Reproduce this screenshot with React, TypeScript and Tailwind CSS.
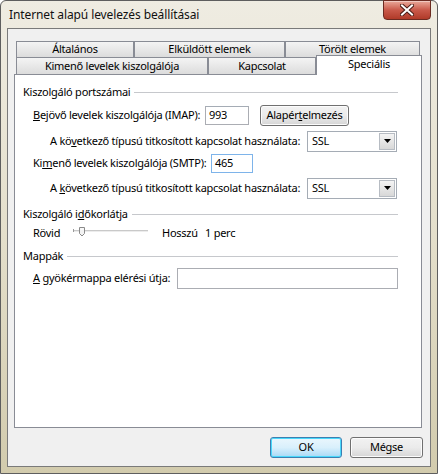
import React from "react";

const font = "font-['Noto_Sans',sans-serif]";

function Tab({ label, w, selected }: { label: string; w: string; selected?: boolean }) {
  if (selected) {
    return (
      <div
        className={`${w} relative z-10 -mt-[2px] -mb-[1px] h-[20px] border border-b-0 border-[#898c95] bg-white flex items-start justify-center leading-[16px] text-black`}
      >
        {label}
      </div>
    );
  }
  return (
    <div
      className={`${w} h-full border border-b-0 border-[#898c95] bg-gradient-to-b from-[#f4f4f4] to-[#dcdcdc] flex items-center justify-center text-black`}
    >
      {label}
    </div>
  );
}

function GroupHeader({ children }: { children: React.ReactNode }) {
  return (
    <div className="h-[16px] flex items-center gap-[4px]">
      <span className="whitespace-nowrap">{children}</span>
      <div className="flex-1 border-t border-[#c6c8cc]" />
    </div>
  );
}

function Select({ value }: { value: string }) {
  return (
    <div className="w-[90px] h-[21px] border border-[#a5acb5] bg-white p-[1px] flex">
      <div className="flex-1 flex items-center pl-[3px]">{value}</div>
      <div className="w-[16px] h-full border border-[#b7bcc3] bg-gradient-to-b from-[#f4f4f4] to-[#d8d8d8] flex items-center justify-center">
        <svg width="7" height="4" viewBox="0 0 7 4">
          <path d="M0 0h7L3.5 4z" fill="#000" />
        </svg>
      </div>
    </div>
  );
}

function Slider() {
  return (
    <svg width="76" height="20" viewBox="0 0 76 20" className="shrink-0">
      <rect x="0" y="7" width="75" height="1" fill="#c9c9c9" />
      <rect x="0" y="8" width="75" height="1" fill="#ececec" />
      <path d="M0.5 6v3" stroke="#9a9a9a" />
      <path d="M6.5 4.5h5v6l-2.5 2.5l-2.5-2.5z" fill="#f3f3f3" stroke="#8a8a8a" />
      <path d="M7.5 6h3" stroke="#ffffff" />
    </svg>
  );
}

export default function App() {
  return (
    <div className={`${font} w-[438px] h-[474px] bg-white`}>
      <div className="w-[438px] h-[474px] flex flex-col border border-[#5e5e5e] rounded-t-[6px] bg-gradient-to-b from-[#efece2] via-[#e4dfcb] to-[#d2cbad]">
        {/* title bar */}
        <div className="h-[27px] flex items-start justify-between shrink-0">
          <div className="pl-[8px] pt-[5px] text-[12px] tracking-[-0.1px] text-[#111] whitespace-nowrap">
            Internet alapú levelezés beállításai
          </div>
          <div className="mr-[6px] -mt-[1px] w-[48px] h-[20px] rounded-b-[4px] border border-[#6b2b22] bg-gradient-to-b from-[#e9a99b] via-[#c9594a] to-[#b03a28] flex items-center justify-center shadow-[inset_0_1px_0_rgba(255,255,255,0.4)]">
            <svg width="14" height="12" viewBox="0 0 14 12">
              <path d="M2 1.5l10 9M12 1.5l-10 9" stroke="#4a1c16" strokeWidth="4" strokeLinecap="square" />
              <path d="M2 1.5l10 9M12 1.5l-10 9" stroke="#ffffff" strokeWidth="2" strokeLinecap="square" />
            </svg>
          </div>
        </div>

        {/* client */}
        <div className="mx-[6px] mb-[6px] flex-1 border border-[#7a7a7a] bg-[#f0f0f0] flex flex-col text-[11px] tracking-[-0.25px] text-black">
          <div className="pt-[12px] pl-[8px] flex flex-col">
            <div className="h-[16px] flex">
              <Tab label="Általános" w="w-[118px]" />
              <Tab label="Elküldött elemek" w="w-[151px]" />
              <Tab label="Törölt elemek" w="w-[135px]" />
            </div>
            <div className="h-[17px] flex">
              <Tab label="Kimenő levelek kiszolgálója" w="w-[192px]" />
              <Tab label="Kapcsolat" w="w-[108px]" />
              <Tab label="Speciális" w="w-[106px]" selected />
            </div>
          </div>

          {/* panel */}
          <div className="ml-[6px] w-[408px] h-[354px] border border-[#898c95] bg-white pl-[8px] pr-[23px] pt-[9px] flex flex-col">
            <GroupHeader>Kiszolgáló portszámai</GroupHeader>

            <div className="mt-[5px] h-[20px] flex items-center pl-[10px]">
              <div className="w-[172px] whitespace-nowrap">
                <u>B</u>ejövő levelek kiszolgálója (IMAP):
              </div>
              <div className="w-[44px] h-[19px] border border-[#abadb3] border-t-[#a5acb5] flex items-center pl-[3px]">993</div>
              <div className="ml-[11px] w-[89px] h-[21px] rounded-[3px] border border-[#707070] bg-gradient-to-b from-[#f2f2f2] via-[#ebebeb] to-[#d6d6d6] flex items-center justify-center shadow-[inset_0_0_0_1px_#fcfcfc]">
                Alapér<u>t</u>elmezés
              </div>
            </div>

            <div className="mt-[6px] h-[20px] flex items-center pl-[27px]">
              <div className="w-[257px] whitespace-nowrap">
                A kö<u>v</u>etkező típusú titkosított kapcsolat használata:
              </div>
              <Select value="SSL" />
            </div>

            <div className="mt-[2px] h-[20px] flex items-center pl-[10px]">
              <div className="w-[178px] whitespace-nowrap">
                Ki<u>m</u>enő levelek kiszolgálója (SMTP):
              </div>
              <div className="w-[42px] h-[19px] border border-[#7eb4ea] flex items-center pl-[3px]">465</div>
            </div>

            <div className="mt-[5px] h-[20px] flex items-center pl-[27px]">
              <div className="w-[257px] whitespace-nowrap">
                A <u>k</u>övetkező típusú titkosított kapcsolat használata:
              </div>
              <Select value="SSL" />
            </div>

            <div className="mt-[8px]">
              <GroupHeader>
                Kiszolgáló i<u>d</u>őkorlátja
              </GroupHeader>
            </div>

            <div className="mt-[1px] h-[20px] flex items-center pl-[10px]">
              <div className="w-[40px]">Rövid</div>
              <Slider />
              <div className="ml-[13px] w-[43px]">Hosszú</div>
              <div>1 perc</div>
            </div>

            <div className="mt-[5px]">
              <GroupHeader>Mappák</GroupHeader>
            </div>

            <div className="mt-[4px] h-[20px] flex items-center pl-[10px]">
              <div className="w-[144px] whitespace-nowrap">
                <u>A</u> gyökérmappa elérési útja:
              </div>
              <div className="flex-1 h-[21px] border border-[#abadb3]" />
            </div>
          </div>

          {/* buttons */}
          <div className="mt-[9px] pr-[7px] flex justify-end gap-[8px]">
            <div className="w-[72px] h-[21px] rounded-[3px] border border-[#3c7fb1] bg-gradient-to-b from-[#eaf6fd] via-[#d9f0fc] to-[#a7d9f5] flex items-center justify-center shadow-[inset_0_0_0_1px_#48d8fb]">
              OK
            </div>
            <div className="w-[73px] h-[21px] rounded-[3px] border border-[#707070] bg-gradient-to-b from-[#f2f2f2] via-[#ebebeb] to-[#d6d6d6] flex items-center justify-center shadow-[inset_0_0_0_1px_#fcfcfc]">
              Mégse
            </div>
          </div>
        </div>
      </div>
    </div>
  );
}
